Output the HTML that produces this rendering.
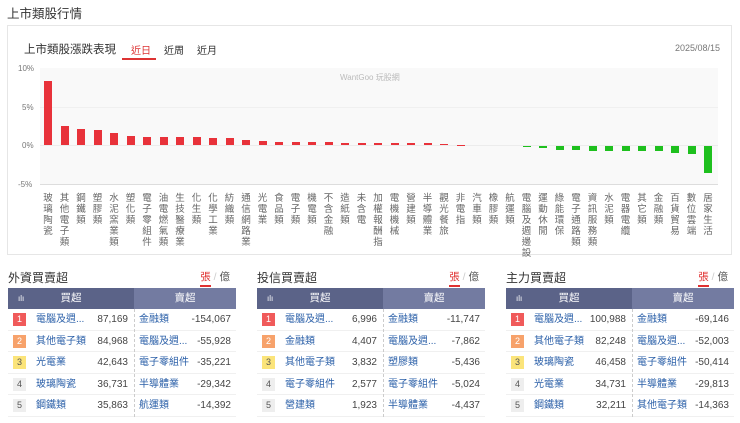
<!DOCTYPE html>
<html><head><meta charset="utf-8"><style>
*{margin:0;padding:0;box-sizing:border-box}
body{width:740px;height:423px;background:#fff;font-family:"Liberation Sans","Noto Sans CJK TC",sans-serif;color:#333;position:relative;overflow:hidden}
.a{position:absolute;white-space:nowrap}
.lbl{position:absolute;top:193px;width:12px;font-size:9.5px;line-height:11px;color:#666;text-align:center;white-space:normal;word-break:break-all}
.bar{position:absolute;width:8px}
.panel{position:absolute;top:266px;width:228px}
.panel .t{position:absolute;left:0;top:3px;font-size:12px;color:#333}
.panel .u{position:absolute;right:6px;top:3px;font-size:10.5px;color:#555}
.panel .u b{color:#e03030;font-weight:normal;border-bottom:2px solid #e03030;padding-bottom:2px}
.hd{position:absolute;top:22px;left:0;width:228px;height:21px;font-size:10.5px;color:#fff}
.hd .l{position:absolute;left:0;width:126px;height:21px;background:#5b6388;text-align:center;line-height:21px}
.hd .r{position:absolute;left:126px;width:102px;height:21px;background:#737ba1;text-align:center;line-height:21px}
.row{position:absolute;left:0;width:228px;height:21.5px;border-bottom:1px solid #f0f0f0;font-size:10px;line-height:21px}
.bd{position:absolute;left:5px;top:4px;width:13px;height:13px;font-size:9px;line-height:13px;text-align:center;color:#555;background:#eee}
.n1{position:absolute;left:28px;color:#2a5fa8}
.v1{position:absolute;right:108px;color:#444}
.n2{position:absolute;left:131px;color:#2a5fa8}
.v2{position:absolute;right:5px;color:#444}
.sep{position:absolute;left:126px;top:43px;height:108px;border-left:1px dashed #ccc}
</style></head><body>
<div class="a" style="left:7px;top:3px;font-size:12.5px;color:#333">上市類股行情</div>
<div class="a" style="left:7px;top:25px;width:725px;height:230px;border:1px solid #e6e6e6"></div>
<div class="a" style="left:24px;top:41px;font-size:11.5px;color:#333">上市類股漲跌表現</div>
<div class="a" style="left:131px;top:42px;font-size:10px;color:#d33">近日</div>
<div class="a" style="left:122px;top:58px;width:34px;height:2px;background:#d33"></div>
<div class="a" style="left:164px;top:42px;font-size:10px;color:#333">近周</div>
<div class="a" style="left:197px;top:42px;font-size:10px;color:#333">近月</div>
<div class="a" style="left:675px;top:43px;font-size:9px;color:#777">2025/08/15</div>
<div class="a" style="left:40px;top:68px;width:678px;height:116px;background:#f9f9f9"></div>
<div class="a" style="left:40px;top:107px;width:678px;height:1px;background:#f0f0f0"></div>
<div class="a" style="left:40px;top:145px;width:678px;height:1px;background:#ececec"></div>
<div class="a" style="left:40px;top:184px;width:678px;height:1px;background:#ddd"></div>
<div class="a" style="left:18px;top:64px;font-size:8px;color:#777">10%</div>
<div class="a" style="left:22px;top:103px;font-size:8px;color:#777">5%</div>
<div class="a" style="left:22px;top:141px;font-size:8px;color:#777">0%</div>
<div class="a" style="left:18px;top:180px;font-size:8px;color:#777">-5%</div>
<div class="a" style="left:340px;top:72px;font-size:8px;color:#bbb">WantGoo 玩股網</div>
<div id="chart"></div>
<div id="tabs"></div>
<script>
var L=["玻璃陶瓷","其他電子類","鋼鐵類","塑膠類","水泥窯業類","塑化類","電子零組件","油電燃氣類","生技醫療業","化生類","化學工業","紡織類","通信網路業","光電業","食品類","電子類","機電類","不含金融","造紙類","未含電","加權報酬指","電機機械","營建類","半導體業","觀光餐旅","非電指","汽車類","橡膠類","航運類","電腦及週邊設","運動休閒","綠能環保","電子通路類","資訊服務類","水泥類","電器電纜","其它類","金融類","百貨貿易","數位雲端","居家生活"];
var V=[8.3,2.5,2.1,2.0,1.5,1.2,1.1,1.0,1.0,1.0,0.9,0.9,0.6,0.5,0.4,0.4,0.4,0.4,0.3,0.3,0.3,0.3,0.3,0.2,0.15,0.05,0,0,-0.03,-0.1,-0.3,-0.5,-0.5,-0.6,-0.6,-0.6,-0.6,-0.7,-0.9,-1.0,-3.5];
var h="";
for(var i=0;i<L.length;i++){var cx=48+i*16.5,v=V[i],px=Math.abs(v)*7.7;
if(px>0.3){if(v>0)h+='<div class="bar" style="left:'+(cx-4)+'px;top:'+(145-px)+'px;height:'+px+'px;background:#e8323a"></div>';else h+='<div class="bar" style="left:'+(cx-4)+'px;top:146px;height:'+px+'px;background:#1ec01e"></div>';}
h+='<div class="lbl" style="left:'+(cx-6)+'px">'+L[i]+'</div>';}
document.getElementById("chart").innerHTML=h;
var P=[[8,"外資買賣超",[["電腦及週...","87,169","金融類","-154,067"],["其他電子類","84,968","電腦及週...","-55,928"],["光電業","42,643","電子零組件","-35,221"],["玻璃陶瓷","36,731","半導體業","-29,342"],["鋼鐵類","35,863","航運類","-14,392"]]],
[257,"投信買賣超",[["電腦及週...","6,996","金融類","-11,747"],["金融類","4,407","電腦及週...","-7,862"],["其他電子類","3,832","塑膠類","-5,436"],["電子零組件","2,577","電子零組件","-5,024"],["營建類","1,923","半導體業","-4,437"]]],
[506,"主力買賣超",[["電腦及週...","100,988","金融類","-69,146"],["其他電子類","82,248","電腦及週...","-52,003"],["玻璃陶瓷","46,458","電子零組件","-50,414"],["光電業","34,731","半導體業","-29,813"],["鋼鐵類","32,211","其他電子類","-14,363"]]]];
var bc=[["#f05a5a","#fff"],["#f7a26b","#fff"],["#fbe47a","#555"],["#eee","#555"],["#eee","#555"]];
var t="";
P.forEach(function(p){t+='<div class="panel" style="left:'+p[0]+'px"><div class="t">'+p[1]+'</div><div class="u"><b>張</b> <span style="color:#ccc">/</span> 億</div><div class="hd"><div class="l"><span style="position:absolute;left:10px;font-size:8px">ılı</span>買超</div><div class="r">賣超</div></div>';
p[2].forEach(function(r,k){t+='<div class="row" style="top:'+(43+k*21.5)+'px"><div class="bd" style="background:'+bc[k][0]+';color:'+bc[k][1]+'">'+(k+1)+'</div><span class="n1">'+r[0]+'</span><span class="v1">'+r[1]+'</span><span class="n2">'+r[2]+'</span><span class="v2">'+r[3]+'</span></div>';});
t+='<div class="sep"></div></div>';});
document.getElementById("tabs").innerHTML=t;
</script>
</body></html>
